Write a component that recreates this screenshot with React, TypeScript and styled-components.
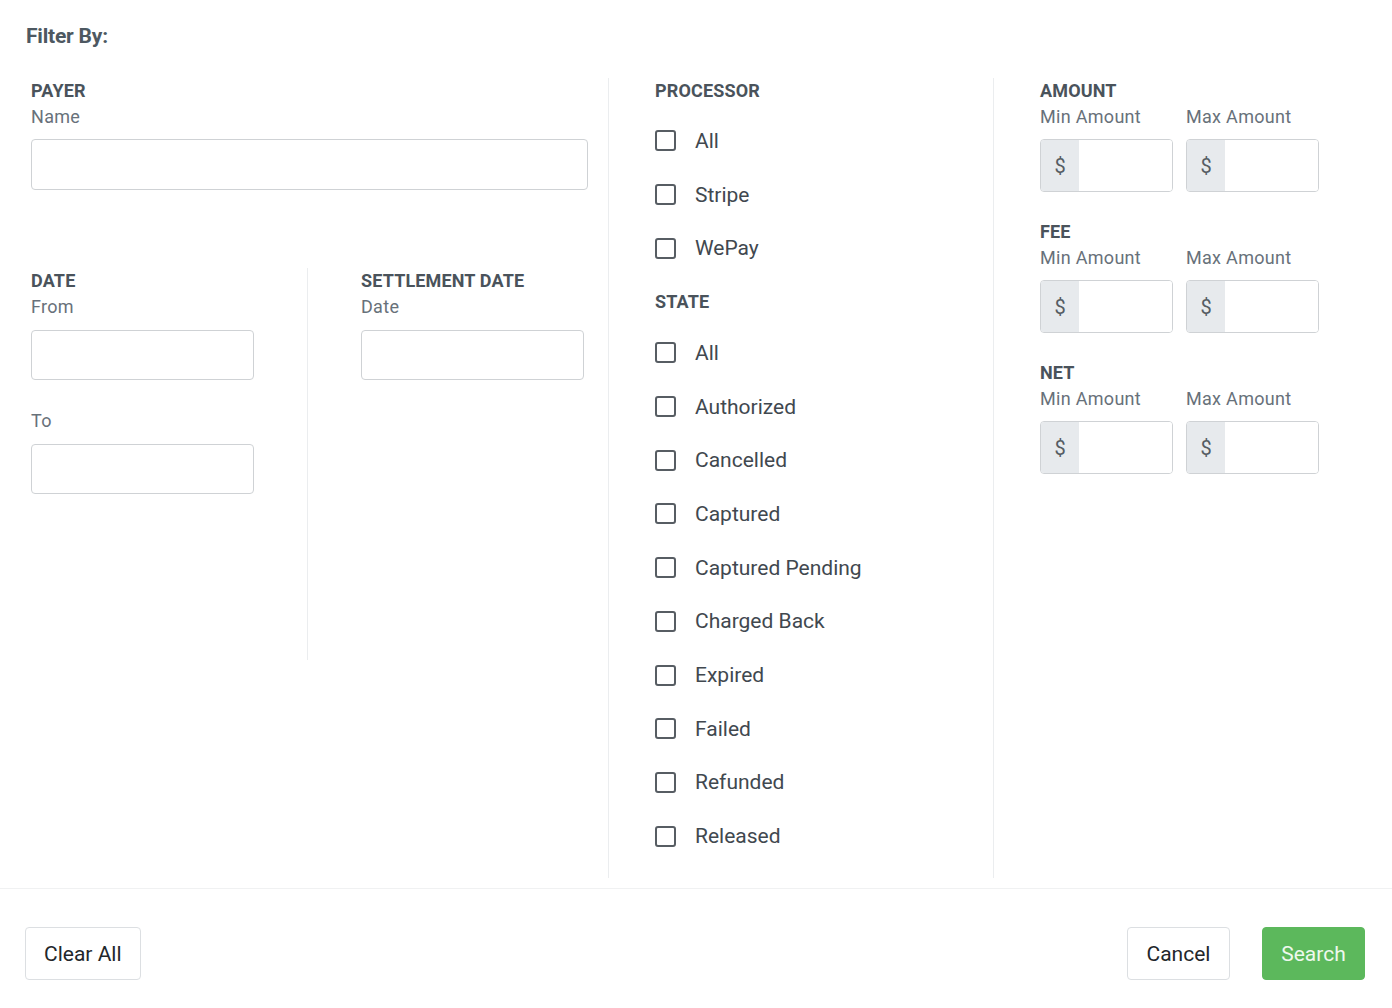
import styled, { createGlobalStyle } from "styled-components";

const GlobalStyle = createGlobalStyle`
  body {
    margin: 0;
    background: #ffffff;
    font-family: Roboto, "Liberation Sans", Arial, sans-serif;
  }
`;

const processors = ["All", "Stripe", "WePay"];
const states = [
  "All",
  "Authorized",
  "Cancelled",
  "Captured",
  "Captured Pending",
  "Charged Back",
  "Expired",
  "Failed",
  "Refunded",
  "Released",
];
const ranges = ["AMOUNT", "FEE", "NET"];

function CheckRow({ label }: { label: string }) {
  return (
    <CheckItem>
      <Box type="checkbox" />
      <CheckLabel>{label}</CheckLabel>
    </CheckItem>
  );
}

function MoneyInput() {
  return (
    <MoneyGroup>
      <Addon>$</Addon>
      <MoneyField />
    </MoneyGroup>
  );
}

function App() {
  return (
    <>
      <GlobalStyle />
      <Modal>
        <Header>Filter By:</Header>
        <Body>
          <LeftCol>
            <Heading>PAYER</Heading>
            <SubLabel>Name</SubLabel>
            <TextInput />
            <DateRow>
              <DateCol>
                <Heading>DATE</Heading>
                <SubLabel>From</SubLabel>
                <DateInput />
                <SubLabel $top={28}>To</SubLabel>
                <DateInput />
              </DateCol>
              <SettleCol>
                <Heading>SETTLEMENT DATE</Heading>
                <SubLabel>Date</SubLabel>
                <DateInput />
              </SettleCol>
            </DateRow>
          </LeftCol>
          <MiddleCol>
            <Heading>PROCESSOR</Heading>
            <CheckList $top={10}>
              {processors.map((p) => (
                <CheckRow key={p} label={p} />
              ))}
            </CheckList>
            <Heading $top={14}>STATE</Heading>
            <CheckList $top={11}>
              {states.map((s) => (
                <CheckRow key={s} label={s} />
              ))}
            </CheckList>
          </MiddleCol>
          <RightCol>
            {ranges.map((r) => (
              <RangeSection key={r}>
                <Heading>{r}</Heading>
                <RangeGrid>
                  <div>
                    <SubLabel>Min Amount</SubLabel>
                    <MoneyInput />
                  </div>
                  <div>
                    <SubLabel>Max Amount</SubLabel>
                    <MoneyInput />
                  </div>
                </RangeGrid>
              </RangeSection>
            ))}
          </RightCol>
        </Body>
        <Footer>
          <Button>Clear All</Button>
          <Actions>
            <Button>Cancel</Button>
            <PrimaryButton>Search</PrimaryButton>
          </Actions>
        </Footer>
      </Modal>
    </>
  );
}

const Modal = styled.div`
  width: 1392px;
  height: 1008px;
  background: #ffffff;
  display: flex;
  flex-direction: column;
`;

const Header = styled.div`
  padding: 24px 0 0 26px;
  height: 78px;
  box-sizing: border-box;
  font-size: 21px;
  font-weight: 700;
  color: #4d5861;
  letter-spacing: -0.2px;
`;

const Body = styled.div`
  display: grid;
  grid-template-columns: 578px 385px 1fr;
  padding-left: 31px;
  height: 800px;
`;

const Column = styled.div`
  display: flex;
  flex-direction: column;
  border-right: 1px solid #ebedef;
`;

const LeftCol = styled(Column)`
  padding-right: 20px;
`;

const MiddleCol = styled(Column)`
  padding-left: 46px;
`;

const RightCol = styled.div`
  padding-left: 46px;
  display: flex;
  flex-direction: column;
  gap: 27px;
`;

const Heading = styled.div<{ $top?: number }>`
  margin-top: ${(p) => p.$top ?? 0}px;
  height: 26px;
  line-height: 26px;
  font-size: 18px;
  font-weight: 700;
  color: #4a535b;
  letter-spacing: 0.15px;
`;

const SubLabel = styled.div<{ $top?: number }>`
  margin-top: ${(p) => p.$top ?? 0}px;
  height: 26px;
  line-height: 26px;
  font-size: 18px;
  color: #68717a;
  letter-spacing: 0.3px;
`;

const TextInput = styled.input`
  margin-top: 9px;
  height: 51px;
  width: 100%;
  box-sizing: border-box;
  border: 1px solid #cfd2d5;
  border-radius: 4px;
  outline: none;
`;

const DateRow = styled.div`
  display: flex;
  margin-top: 78px;
  height: 392px;
`;

const DateCol = styled.div`
  width: 277px;
  padding-right: 54px;
  box-sizing: border-box;
  border-right: 1px solid #ebedef;
  display: flex;
  flex-direction: column;
`;

const SettleCol = styled.div`
  padding-left: 53px;
  display: flex;
  flex-direction: column;
`;

const DateInput = styled.input`
  margin-top: 10px;
  height: 50px;
  width: 223px;
  box-sizing: border-box;
  border: 1px solid #cfd2d5;
  border-radius: 4px;
  outline: none;
`;

const CheckList = styled.div<{ $top: number }>`
  margin-top: ${(p) => p.$top}px;
  display: flex;
  flex-direction: column;
`;

const CheckItem = styled.label`
  height: 53.7px;
  display: flex;
  align-items: center;
  gap: 19px;
`;

const Box = styled.input`
  appearance: none;
  margin: 0;
  width: 21px;
  height: 21px;
  box-sizing: border-box;
  border: 2px solid #575d63;
  border-radius: 3px;
  background: #ffffff;
`;

const CheckLabel = styled.span`
  font-size: 21px;
  color: #41484f;
`;

const RangeSection = styled.div`
  display: flex;
  flex-direction: column;
`;

const RangeGrid = styled.div`
  display: grid;
  grid-template-columns: 133px 133px;
  column-gap: 13px;
`;

const MoneyGroup = styled.div`
  margin-top: 9px;
  height: 53px;
  display: flex;
  border: 1px solid #cfd2d5;
  border-radius: 4px;
  overflow: hidden;
  box-sizing: border-box;
`;

const Addon = styled.span`
  width: 38px;
  background: #e7eaed;
  display: flex;
  align-items: center;
  justify-content: center;
  font-size: 20px;
  color: #555c63;
`;

const MoneyField = styled.input`
  flex: 1;
  min-width: 0;
  border: none;
  outline: none;
`;

const Footer = styled.div`
  border-top: 1px solid #f0f1f2;
  margin-top: 10px;
  padding: 38px 27px 0 25px;
  display: flex;
  justify-content: space-between;
  align-items: flex-start;
`;

const Actions = styled.div`
  display: flex;
  gap: 32px;
`;

const Button = styled.button`
  height: 53px;
  padding: 0 18px;
  min-width: 103px;
  background: #ffffff;
  border: 1px solid #dcdfe2;
  border-radius: 4px;
  font-family: Roboto, "Liberation Sans", Arial, sans-serif;
  font-size: 21px;
  color: #23272b;
  cursor: pointer;
`;

const PrimaryButton = styled(Button)`
  background: #5cb85c;
  border-color: #5cb85c;
  color: #eef8ee;
`;

export default App;
